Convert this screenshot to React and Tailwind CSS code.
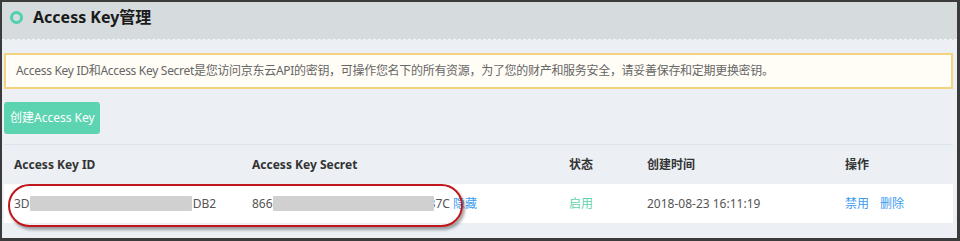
import React from "react";

const font = { fontFamily: '"Noto Sans", "Noto Sans CJK SC", sans-serif' };

const Masked = ({ width }) => (
  <span className={`relative z-10 inline-block h-[15px] rounded-[1px] bg-[#d0d0d0] blur-[0.5px] ${width}`} />
);

export default function App() {
  return (
    <div
      style={font}
      className="relative w-[960px] h-[241px] overflow-hidden border-t-2 border-l-2 border-r-[3px] border-b-[3px] border-[#3b3b3b] bg-[#ecf0f5]"
    >
      {/* header */}
      <div className="h-[38px] bg-[#d6dbde] border-b border-dashed border-[#f4f6f8]">
        <div className="flex items-center h-[30px] pl-[8px] gap-[10px]">
          <span className="w-[13px] h-[13px] rounded-full border-[3px] border-[#4fd0af]" />
          <h1 className="text-[16px] font-bold text-[#1a1a1a] leading-none">Access Key管理</h1>
        </div>
      </div>

      <div className="pl-[2px]">
        {/* notice */}
        <div className="mt-[13px] w-[949px] h-[36px] flex items-center pl-[10px] border-2 border-[#f5d27e] bg-[#fffdf6] text-[12px] tracking-[-0.3px] text-[#666]">
          Access Key ID和Access Key Secret是您访问京东云API的密钥，可操作您名下的所有资源，为了您的财产和服务安全，请妥善保存和定期更换密钥。
        </div>

        <button className="mt-[13px] w-[96px] h-[32px] rounded-[3px] bg-[#5cd4b2] text-white text-[12px] text-left pl-[6px]">
          创建Access Key
        </button>

        {/* table */}
        <div className="relative mt-[10px] w-[949px] border-t border-[#dde3ea]">
          <div className="grid grid-cols-[238px_317px_78px_198px_118px] h-[39px] items-center text-[12px] font-bold text-[#333]">
            <div className="pl-[10px]">Access Key ID</div>
            <div className="pl-[10px]">Access Key Secret</div>
            <div className="pl-[10px]">状态</div>
            <div className="pl-[10px]">创建时间</div>
            <div className="pl-[10px]">操作</div>
          </div>
          <div className="grid grid-cols-[238px_317px_78px_198px_118px] h-[39px] items-center bg-white text-[12px] text-[#555]">
            <div className="pl-[10px] flex items-center">
              <span>3D</span>
              <Masked width="w-[162px]" />
              <span className="ml-px">DB2</span>
            </div>
            <div className="pl-[10px] flex items-center">
              <span>866</span>
              <Masked width="w-[161px]" />
              <span className="-ml-[5px]">37C</span>
              <span className="ml-[3px] text-[#3d9cf2]">隐藏</span>
            </div>
            <div className="pl-[10px] text-[#5fd1aa]">启用</div>
            <div className="pl-[10px]">2018-08-23 16:11:19</div>
            <div className="pl-[10px] flex gap-[11px] text-[#3d9cf2]">
              <span>禁用</span>
              <span>删除</span>
            </div>
          </div>

          {/* red annotation */}
          <div className="absolute left-[4px] top-[39px] w-[455px] h-[43px] rounded-full border-2 border-[#c0161c] shadow-[2px_3px_3px_rgba(0,0,0,0.35)] pointer-events-none" />
        </div>
      </div>
    </div>
  );
}
